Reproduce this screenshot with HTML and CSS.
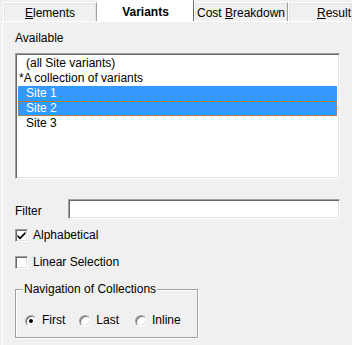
FILE: index.html
```html
<!DOCTYPE html>
<html>
<head>
<meta charset="utf-8">
<link rel="stylesheet" href="styles.css">
</head>
<body>
<div class="tabs">
  <div class="tab t-elements"><u>E</u>lements</div>
  <div class="tab tab-active t-variants">Variants</div>
  <div class="tab t-cost">Cost <u>B</u>reakdown</div>
  <div class="tab t-result"><u>R</u>esult</div>
</div>
<div class="panel">
  <div class="label">Available</div>
  <div class="listbox">
    <div class="item indent">(all Site variants)</div>
    <div class="item">*A collection of variants</div>
    <div class="item indent sel">Site 1</div>
    <div class="item indent sel focus">Site 2</div>
    <div class="item indent">Site 3</div>
  </div>
  <div class="filter-row">
    <span class="filter-label">Filter</span>
    <div class="input"></div>
  </div>
  <div class="check-row first-check">
    <span class="checkbox"><svg width="9" height="9" viewBox="0 0 9 9"><path d="M0.5 3.5 L3 6 L8.5 0.5 L8.5 3 L3 8.5 L0.5 6 Z" fill="#000"/></svg></span>
    <span>Alphabetical</span>
  </div>
  <div class="check-row second-check">
    <span class="checkbox"></span>
    <span>Linear Selection</span>
  </div>
  <div class="group">
    <div class="group-title">Navigation of Collections</div>
    <div class="radios">
      <span class="radio-opt"><span class="radio on"></span>First</span>
      <span class="radio-opt"><span class="radio"></span>Last</span>
      <span class="radio-opt"><span class="radio"></span>Inline</span>
    </div>
  </div>
</div>
</body>
</html>
```
FILE: styles.css
```css
html, body {
  margin: 0;
  padding: 0;
  background: #f0f0f0;
  font-family: "Liberation Sans", Arial, sans-serif;
  font-size: 12px;
  line-height: 15px;
  color: #000;
  width: 352px;
  height: 345px;
  overflow: hidden;
}

.tabs {
  display: flex;
  height: 21px;
  padding-left: 3px;
  align-items: flex-end;
  white-space: nowrap;
  overflow: hidden;
}

.tab {
  box-sizing: border-box;
  height: 19px;
  background: #f0f0f0;
  border-top: 1px solid #ffffff;
  border-left: 1px solid #ffffff;
  border-right: 1px solid #a0a0a0;
  box-shadow: inset -1px 0 0 #e3e3e3, inset 1px 1px 0 #e3e3e3;
  text-align: center;
  padding-top: 3px;
  flex: none;
}

.tab-active {
  height: 21px;
  background: #ffffff;
  font-weight: bold;
  padding-top: 4px;
  border-right: 1px solid #696969;
  box-shadow: none;
  border-top: 1px solid #ffffff;
}

.t-elements { width: 94px; }
.t-variants { width: 97px; }
.t-cost { width: 94px; }
.t-result { width: 64px; padding-left: 28px; text-align: left; border-right: none; }

.panel {
  box-sizing: border-box;
  margin-left: 2px;
  border-left: 1px solid #ffffff;
  border-top: 1px solid #ffffff;
  padding: 9px 0 0 12px;
  height: 324px;
  overflow: hidden;
}

.label {
  height: 15px;
}

.listbox {
  margin-top: 7px;
  width: 325px;
  height: 126px;
  box-sizing: border-box;
  background: #fff;
  border-top: 1px solid #a0a0a0;
  border-left: 1px solid #a0a0a0;
  border-right: 1px solid #ffffff;
  border-bottom: 1px solid #ffffff;
  box-shadow: inset 1px 1px 0 #696969, inset -1px -1px 0 #e3e3e3;
  padding: 2px 2px 0 2px;
}

.item {
  height: 15px;
  padding-left: 1px;
  white-space: nowrap;
}

.item.indent {
  padding-left: 8px;
}

.item.sel {
  background: #3399ff;
  color: #fff;
}

.item.focus {
  outline: 1px dotted #c8763a;
  outline-offset: -1px;
}

.filter-row {
  margin-top: 20px;
  display: flex;
  align-items: center;
  height: 20px;
}

.filter-label {
  width: 53px;
  padding-top: 4px;
}

.input {
  width: 272px;
  height: 20px;
  box-sizing: border-box;
  background: #fff;
  border-top: 1px solid #a0a0a0;
  border-left: 1px solid #a0a0a0;
  border-right: 1px solid #ffffff;
  border-bottom: 1px solid #ffffff;
  box-shadow: inset 1px 1px 0 #696969, inset -1px -1px 0 #e3e3e3;
}

.check-row {
  display: flex;
  align-items: center;
  height: 15px;
}

.first-check { margin-top: 9px; }
.second-check { margin-top: 12px; }

.checkbox {
  width: 13px;
  height: 13px;
  box-sizing: border-box;
  background: #fff;
  border-top: 1px solid #a0a0a0;
  border-left: 1px solid #a0a0a0;
  border-right: 1px solid #ffffff;
  border-bottom: 1px solid #ffffff;
  box-shadow: inset 1px 1px 0 #696969, inset -1px -1px 0 #e3e3e3;
  margin-right: 5px;
  display: flex;
  align-items: center;
  justify-content: center;
}

.checkbox svg {
  display: block;
}

.group {
  margin-top: 19px;
  width: 183px;
  box-sizing: border-box;
  height: 49px;
  border: 1px solid #a0a0a0;
  box-shadow: 1px 1px 0 #fff, inset 1px 1px 0 #fff;
  padding: 0 0 0 9px;
}

.group-title {
  display: inline-block;
  background: #f0f0f0;
  padding: 0 1px;
  margin: -8px 0 0 -2px;
  height: 15px;
  vertical-align: top;
}

.radios {
  display: flex;
  margin-top: 8px;
  height: 15px;
  align-items: center;
}

.radio-opt {
  display: flex;
  align-items: center;
  margin-right: 14px;
}

.radio-opt:nth-child(2) { margin-right: 16px; }

.radio {
  width: 12px;
  height: 12px;
  box-sizing: border-box;
  border-radius: 50%;
  background: #fff;
  border: 1px solid;
  border-color: #a0a0a0 #ffffff #ffffff #a0a0a0;
  box-shadow: inset 1px 1px 0 #696969, inset -1px -1px 0 #e3e3e3;
  margin-right: 5px;
  position: relative;
}

.radio.on::after {
  content: "";
  position: absolute;
  left: 3px;
  top: 3px;
  width: 4px;
  height: 4px;
  border-radius: 50%;
  background: #000;
}
```
